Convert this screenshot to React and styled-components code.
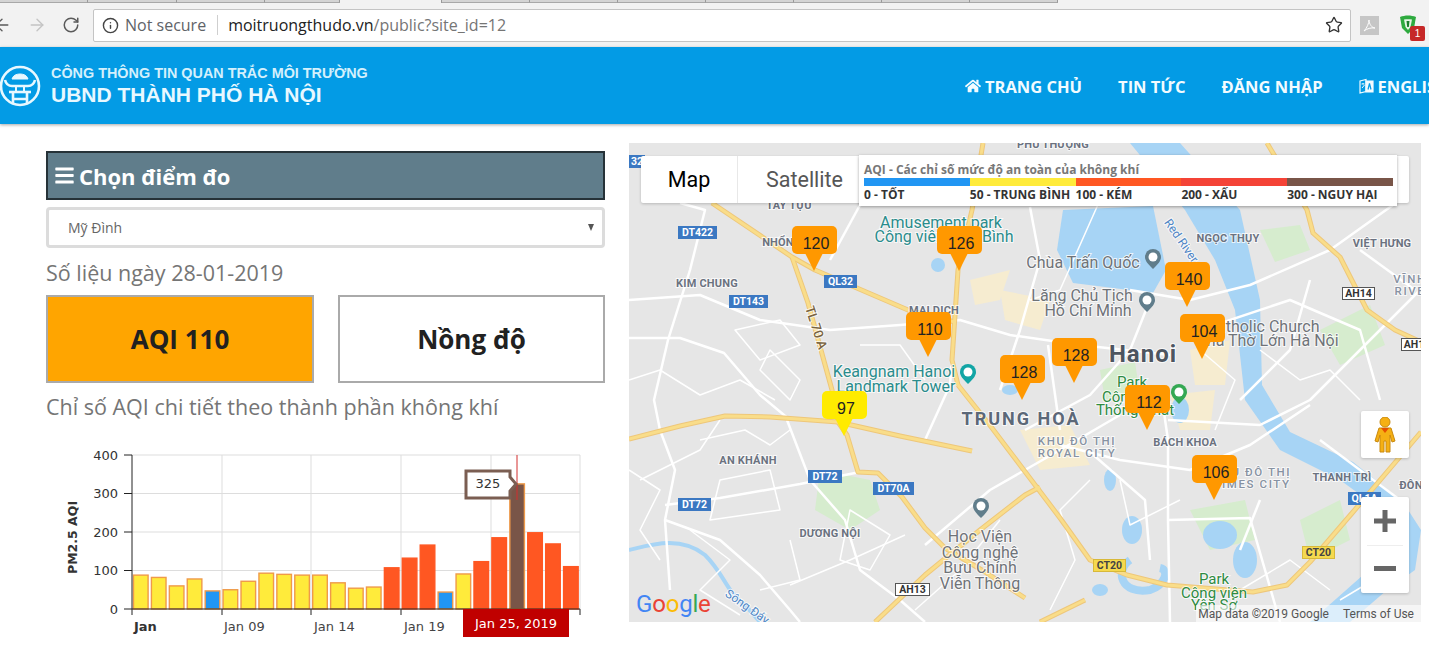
import React from "react";
import styled, { createGlobalStyle } from "styled-components";
import { ArrowLeft, ArrowRight, RotateCw, Info, Star } from "lucide-react";
import { FaHome, FaBars } from "react-icons/fa";

const GlobalStyle = createGlobalStyle`
  html, body {
    margin: 0;
    padding: 0;
    background: #fff;
    overflow: hidden;
  }
  * { box-sizing: border-box; }
`;

const Page = styled.div`
  width: 1429px;
  height: 645px;
  overflow: hidden;
  font-family: "Open Sans", "Liberation Sans", sans-serif;
`;

/* browser chrome */
const TabStrip = styled.div`
  display: flex;
  height: 3px;
  background: #f2f2f2;
`;

const Tab = styled.div`
  width: ${(p) => p.$w}px;
  background: ${(p) => (p.$active ? "#f2f2f2" : "#d4d4d4")};
  border-right: 1px solid #9a9a9a;
  border-bottom: ${(p) => (p.$active ? "none" : "1px solid #a8a8a8")};
`;

const Toolbar = styled.div`
  display: flex;
  align-items: center;
  height: 44px;
  background: #f2f2f2;
  color: #5a5a5a;
`;

const NavButtons = styled.div`
  display: flex;
  align-items: center;
  width: 93px;
  gap: 15px;
  margin-left: -8px;
  flex: none;
`;

const Omnibox = styled.div`
  display: flex;
  align-items: center;
  width: 1258px;
  height: 33px;
  margin-left: 8px;
  padding: 0 7px 0 8px;
  background: #fff;
  border: 1px solid #c4c4c4;
  border-radius: 2px;
  font-size: 16px;
  flex: none;
`;

const Secure = styled.span`
  margin-left: 6px;
  color: #5f6368;
`;

const UrlDivider = styled.span`
  width: 1px;
  height: 20px;
  background: #cfcfcf;
  margin: 0 10px 0 11px;
`;

const Url = styled.span`
  flex: 1;
  color: #222;
  b { font-weight: 400; color: #757575; }
`;

const Extensions = styled.div`
  display: flex;
  align-items: center;
  gap: 20px;
  margin-left: 9px;
  flex: none;
`;

const PdfIcon = styled.div`
  display: flex;
  align-items: center;
  justify-content: center;
  width: 19px;
  height: 19px;
  background: #c6c6c6;
`;

const ShieldWrap = styled.div`
  position: relative;
  width: 18px;
  height: 20px;
`;

const Badge = styled.span`
  position: absolute;
  left: 11px;
  top: 11px;
  width: 15px;
  height: 15px;
  border-radius: 2px;
  background: #c62828;
  color: #fff;
  font: 10px/15px "Liberation Sans", sans-serif;
  text-align: center;
`;

/* site header */
const Header = styled.header`
  display: flex;
  align-items: center;
  height: 77px;
  background: #039be5;
  box-shadow: 0 1px 3px rgba(0, 0, 0, 0.35);
  color: #fff;
  position: relative;
`;

const Brand = styled.div`
  display: flex;
  align-items: center;
  gap: 9px;
  width: 965px;
  flex: none;
`;

const BrandText = styled.div`
  font-family: "Liberation Sans", Arial, sans-serif;
  font-weight: 700;
`;

const BrandTop = styled.div`
  font-size: 14.4px;
  line-height: 17px;
  color: #d4f0fc;
`;

const BrandBottom = styled.div`
  font-size: 21px;
  line-height: 25px;
  color: #e8f8ff;
`;

const Nav = styled.nav`
  display: flex;
  align-items: center;
  gap: 36px;
  padding-top: 1px;
  white-space: nowrap;
`;

const NavItem = styled.a`
  display: flex;
  align-items: center;
  gap: 4px;
  font-size: 16.5px;
  font-weight: 700;
  color: #f2fbff;
`;

/* content */
const Content = styled.main`
  display: flex;
  gap: 24px;
  padding: 19px 0 0 46px;
`;

const Left = styled.section`
  width: 559px;
  padding-top: 8px;
  flex: none;
`;

const PanelTitle = styled.h2`
  display: flex;
  align-items: center;
  gap: 4px;
  height: 49px;
  margin: 0;
  padding: 0 0 0 6px;
  background: #607d8b;
  border: 2px solid #263238;
  color: #fff;
  font-size: 22px;
  font-weight: 700;
`;

const SiteSelect = styled.div`
  display: flex;
  align-items: center;
  justify-content: space-between;
  height: 41px;
  margin-top: 7px;
  padding: 0 8px 0 19px;
  border: 3px solid #dcdcdc;
  border-radius: 4px;
  font-size: 14px;
  color: #666;
`;

const Caret = styled.span`
  width: 0;
  height: 0;
  border-left: 3.5px solid transparent;
  border-right: 3.5px solid transparent;
  border-top: 7px solid #555;
`;

const Caption = styled.p`
  margin: ${(p) => p.$m};
  font-size: 21.5px;
  line-height: 26px;
  color: #757575;
  white-space: nowrap;
`;

const Tiles = styled.div`
  display: grid;
  grid-template-columns: 268px 267px;
  gap: 24px;
`;

const Tile = styled.div`
  display: flex;
  align-items: center;
  justify-content: center;
  height: 88px;
  background: ${(p) => (p.$active ? "#ffa500" : "#fff")};
  border: 2px solid #aaa;
  color: #212121;
  font-size: 26px;
  font-weight: 700;
`;

const ChartWrap = styled.div`
  margin-top: 25px;
`;

const ChartSvg = styled.svg`
  display: block;
`;

const AxisText = styled.text`
  font-family: "DejaVu Sans", Verdana, sans-serif;
  font-size: ${(p) => p.$size || 13}px;
  font-weight: ${(p) => (p.$bold ? 700 : 400)};
  fill: ${(p) => p.$fill || "#333"};
`;

/* map */
const MapBox = styled.section`
  position: relative;
  width: 792px;
  height: 479px;
  overflow: hidden;
  background: #e6e6e6;
  flex: none;
`;

const MapSvg = styled.svg`
  display: block;
`;

const labelKinds = {
  place: "font: 700 11px Roboto, sans-serif; fill: #6b7280; letter-spacing: .2px;",
  district: "font: 700 18px Roboto, sans-serif; fill: #5c6878; letter-spacing: 2px;",
  area: "font: 500 11.5px Roboto, sans-serif; fill: #8792a2; letter-spacing: 1.6px;",
  poi: "font: 400 16px Roboto, sans-serif; fill: #6f7378;",
  teal: "font: 400 16px Roboto, sans-serif; fill: #2a8c8c;",
  park: "font: 400 15px Roboto, sans-serif; fill: #2e8b42;",
  city: "font: 700 24px Roboto, sans-serif; fill: #4d5560; letter-spacing: 1px;",
  water: "font: 400 12px Roboto, sans-serif; fill: #4f86c6;",
  road: "font: 500 13px Roboto, sans-serif; fill: #7a6440;",
};

const MapLabel = styled.text`
  ${(p) => labelKinds[p.$kind]}
  text-anchor: middle;
  paint-order: stroke;
  stroke: rgba(255, 255, 255, 0.75);
  stroke-width: 2px;
`;

const shieldKinds = {
  blue: "background: #3b78c2; color: #fff; border: 1px solid #3b78c2;",
  yellow: "background: #f5d94e; color: #444; border: 1px solid #d8b93a;",
  white: "background: #fff; color: #333; border: 1px solid #555;",
};

const Shield = styled.div`
  position: absolute;
  left: ${(p) => p.$x - 629}px;
  top: ${(p) => p.$y - 143}px;
  width: ${(p) => p.$w}px;
  height: 13px;
  ${(p) => shieldKinds[p.$kind]}
  font: 700 10.5px/11px Roboto, sans-serif;
  text-align: center;
`;

const Marker = styled.div`
  position: absolute;
  left: ${(p) => p.$x - 629}px;
  top: ${(p) => p.$y - 143}px;
  width: 45px;
  height: 28px;
  padding-left: 3px;
  border-radius: 5px;
  background: ${(p) => (p.$good ? "#ffeb00" : "#ff9800")};
  color: #222;
  font: 16px/35px "Liberation Sans", Arial, sans-serif;
  text-align: center;
  &::after {
    content: "";
    position: absolute;
    left: 13px;
    top: 27px;
    border-left: 9px solid transparent;
    border-right: 9px solid transparent;
    border-top: 18px solid ${(p) => (p.$good ? "#ffeb00" : "#ff9800")};
  }
`;

const MapTypes = styled.div`
  position: absolute;
  left: 12px;
  top: 13px;
  display: flex;
  width: 768px;
  height: 47px;
  background: #fff;
  border-radius: 2px;
  box-shadow: 0 1px 3px rgba(0, 0, 0, 0.2);
  font-family: Roboto, sans-serif;
  font-size: 21.5px;
`;

const MapType = styled.div`
  display: flex;
  align-items: center;
  justify-content: center;
  width: ${(p) => p.$w}px;
  color: ${(p) => (p.$active ? "#000" : "#565656")};
  font-weight: 400;
  border-right: ${(p) => (p.$active ? "1px solid #e8e8e8" : "none")};
`;

const Legend = styled.div`
  position: absolute;
  left: 230px;
  top: 12px;
  width: 538px;
  height: 51px;
  padding: 6px 4px 0 5px;
  background: #fff;
  box-shadow: 0 1px 3px rgba(0, 0, 0, 0.35);
  font-size: 12px;
  font-weight: 700;
`;

const LegendTitle = styled.div`
  height: 17px;
  line-height: 18px;
  color: #777;
  white-space: nowrap;
`;

const LegendGrid = styled.div`
  display: grid;
  grid-template-columns: repeat(5, 1fr);
`;

const LegendCell = styled.div`
  color: #333;
  line-height: 16px;
  white-space: nowrap;
  &::before {
    content: "";
    display: block;
    height: 8px;
    margin-bottom: 1px;
    background: ${(p) => p.$color};
  }
`;

const ControlBox = styled.div`
  position: absolute;
  left: 732px;
  top: ${(p) => p.$top}px;
  display: flex;
  flex-direction: column;
  align-items: center;
  justify-content: center;
  width: 48px;
  height: ${(p) => p.$h}px;
  background: #fff;
  border-radius: 2px;
  box-shadow: 0 1px 3px rgba(0, 0, 0, 0.2);
`;

const ZoomButton = styled.div`
  display: flex;
  align-items: center;
  justify-content: center;
  width: 100%;
  height: 48px;
  & + & {
    position: relative;
  }
  & + &::before {
    content: "";
    position: absolute;
    left: 6px;
    right: 6px;
    top: 0;
    height: 1px;
    background: #eee;
  }
`;

const GoogleLogo = styled.div`
  position: absolute;
  left: 7px;
  top: 447px;
  font: 400 24px/28px Roboto, sans-serif;
  letter-spacing: -0.2px;
`;

const GoogleLetter = styled.span`
  color: ${(p) => p.$color};
`;

const Attribution = styled.div`
  position: absolute;
  right: 0;
  bottom: 0;
  display: flex;
  gap: 14px;
  height: 17px;
  padding: 1px 7px 0 2px;
  background: rgba(255, 255, 255, 0.6);
  font: 12px/17px Roboto, sans-serif;
  color: #555;
`;

const bars = [88, 82, 60, 78, 47, 50, 72, 93, 90, 88, 88, 68, 54, 57, 107, 132, 166, 44, 91, 123, 185, 325, 198, 169, 110];

const barColor = (v) => {
  if (v < 50) return "#2196f3";
  if (v < 100) return "#ffeb3b";
  if (v < 200) return "#ff5722";
  if (v < 300) return "#f44336";
  return "#795548";
};

const AqiChart = () => {
  const y0 = 609;
  const scale = 154 / 400;
  return (
    <ChartSvg width="559" height="200" viewBox="46 445 559 200">
      {[455, 493.5, 532, 570.5].map((y) => (
        <line key={y} x1="132" x2="580" y1={y} y2={y} stroke="#ddd" />
      ))}
      {[222, 311, 401, 491, 580].map((x) => (
        <line key={x} x1={x} x2={x} y1="455" y2={y0} stroke="#ddd" />
      ))}
      {bars.map((v, i) => {
        const h = v * scale;
        const x = 133.5 + i * 17.92;
        const fill = barColor(v);
        return (
          <rect
            key={i}
            x={x}
            y={y0 - h}
            width="14.6"
            height={h}
            fill={fill}
            stroke={v >= 100 && v < 300 ? fill : "#ef9a4a"}
            strokeWidth="1.4"
          />
        );
      })}
      <line x1="132" x2="132" y1="455" y2={y0} stroke="#222" />
      <line x1="124" x2="580" y1={y0} y2={y0} stroke="#222" />
      {[455, 493.5, 532, 570.5].map((y) => (
        <line key={y} x1="124" x2="132" y1={y} y2={y} stroke="#222" />
      ))}
      {[132, 222, 311, 401, 491, 580].map((x) => (
        <line key={x} x1={x} x2={x} y1={y0} y2={y0 + 6} stroke="#222" />
      ))}
      {[
        ["400", 460],
        ["300", 498],
        ["200", 537],
        ["100", 575],
        ["0", 614],
      ].map(([t, y]) => (
        <AxisText key={t} x="118" y={y} textAnchor="end">
          {t}
        </AxisText>
      ))}
      <AxisText x="0" y="0" $bold $size={12.5} transform="translate(77 574) rotate(-90)">
        PM2.5 AQI
      </AxisText>
      <AxisText x="134" y="631" $bold>Jan</AxisText>
      <AxisText x="224" y="631" $fill="#444">Jan 09</AxisText>
      <AxisText x="314" y="631" $fill="#444">Jan 14</AxisText>
      <AxisText x="404" y="631" $fill="#444">Jan 19</AxisText>
      <rect x="463" y="609" width="106" height="28" fill="#c00000" />
      <AxisText x="516" y="628" textAnchor="middle" $fill="#fff">Jan 25, 2019</AxisText>
      <line x1="517" x2="517" y1="455" y2="500" stroke="#d32f2f" />
      <path
        d="M466 471h44v6l6 7-6 7v7h-44z"
        fill="#fff"
        stroke="#7b5e52"
        strokeWidth="3"
      />
      <AxisText x="488" y="488" textAnchor="middle">325</AxisText>
    </ChartSvg>
  );
};

const whiteRoads = [
  "M629 338 L680 338 L724 353 L760 395 L790 420",
  "M680 203 L705 210 L690 270 L668 340 L654 400 L660 430 L675 470 L665 520 L670 590",
  "M629 300 L700 295 L760 320 L830 330 L900 325 L960 320 L1010 335 L1080 345 L1170 355",
  "M787 420 L810 480 L845 520 L860 570 L900 600 L925 622",
  "M665 505 L720 498 L800 484 L860 472",
  "M665 520 L720 540 L760 575 L790 610 L800 622",
  "M1025 430 L1090 395 L1130 350 L1150 300",
  "M925 545 L990 490 L1060 450 L1120 415",
  "M1160 385 L1168 440 L1168 520 L1170 622",
  "M1060 445 L1120 460 L1190 470 L1250 445 L1310 405",
  "M1168 520 L1250 518 L1280 622",
  "M1090 452 L1145 500 L1150 560",
  "M1168 420 L1260 425 L1310 400 L1360 350 L1420 290",
  "M1130 290 L1190 300 L1250 285 L1330 250 L1400 200",
  "M1030 207 L1040 260 L1020 330 L1000 390",
  "M1200 330 L1290 300 L1360 330 L1380 400",
  "M860 205 L830 260",
  "M1310 280 L1290 350 L1240 400",
  "M1320 440 L1400 500",
  "M1260 500 L1240 550",
  "M1360 250 L1415 290",
  "M955 320 L950 385 L925 440",
  "M1048 345 L1060 430",
];

const thinRoads = [
  "M760 370 L790 400 L800 380 L770 350 Z",
  "M735 330 L780 320 L800 345 L760 360 Z",
  "M710 520 L780 510 L770 470 L720 480 Z",
  "M640 480 L700 450 L720 420",
  "M850 510 L890 535 L870 570 L840 560 Z",
  "M1000 520 L960 570 L915 610",
  "M1180 500 L1130 525 L1120 480",
  "M790 585 L850 560 L905 535",
  "M1340 600 L1390 570 L1400 540",
  "M629 380 L660 370 L700 395 L740 380 L775 400",
  "M700 440 L745 430 L770 445 L790 430",
  "M629 470 L660 490 L640 530 L660 560",
  "M690 530 L730 560 L700 590 L740 615",
  "M790 540 L800 580 L760 590",
  "M860 345 L900 345 L925 380",
  "M1100 200 L1060 290 L1030 300",
  "M1260 350 L1300 380 L1330 370 L1360 400",
  "M1240 590 L1290 560 L1330 590",
  "M1090 480 L1060 510 L1075 560 L1050 610",
  "M1200 350 L1235 380 L1215 430",
];

const yellowRoads = [
  "M629 439 L680 426 L725 416 L770 417 L838 422 L900 436 L972 451",
  "M838 422 L847 435 L858 472 L878 473 L902 497 L925 528 L945 548 L985 572 L1025 598",
  "M875 622 L925 575 L980 530 L1025 495 L1040 487",
  "M958 385 L992 428 L1020 465 L1060 518 L1090 560 L1127 575 L1167 585 L1253 592 L1287 585 L1310 562 L1353 512 L1421 432",
  "M712 203 L792 257 L815 270 L908 310 L955 322",
  "M792 257 L808 303 L832 390 L838 422",
  "M983 143 L972 210 L958 270 L952 360 L958 385",
  "M1267 143 L1307 210 L1313 233 L1340 257 L1367 310 L1395 330 L1421 342",
  "M1085 600 L1040 622",
];

const marks = [
  { v: 120, x: 792, y: 226 },
  { v: 126, x: 937, y: 226 },
  { v: 110, x: 906, y: 312 },
  { v: 128, x: 1000, y: 355 },
  { v: 128, x: 1052, y: 338 },
  { v: 140, x: 1165, y: 262 },
  { v: 104, x: 1180, y: 314 },
  { v: 112, x: 1125, y: 385 },
  { v: 106, x: 1192, y: 455 },
  { v: 97, x: 822, y: 391, good: true },
];

const shields = [
  { t: "32", x: 629, y: 155, w: 16, kind: "blue" },
  { t: "DT422", x: 678, y: 226, w: 39, kind: "blue" },
  { t: "QL32", x: 824, y: 275, w: 33, kind: "blue" },
  { t: "DT143", x: 729, y: 295, w: 39, kind: "blue" },
  { t: "DT72", x: 808, y: 470, w: 34, kind: "blue" },
  { t: "DT70A", x: 873, y: 482, w: 41, kind: "blue" },
  { t: "DT72", x: 678, y: 498, w: 33, kind: "blue" },
  { t: "QL1A", x: 1348, y: 492, w: 33, kind: "blue" },
  { t: "AH14", x: 1342, y: 287, w: 33, kind: "white" },
  { t: "AH1", x: 1401, y: 338, w: 26, kind: "white" },
  { t: "AH13", x: 895, y: 583, w: 35, kind: "white" },
  { t: "CT20", x: 1302, y: 546, w: 33, kind: "yellow" },
  { t: "CT20", x: 1093, y: 559, w: 33, kind: "yellow" },
];

const labels = [
  ["place", "PHÚ THƯỢNG", 1053, 148],
  ["place", "TÂY TỰU", 789, 209],
  ["place", "NHỔN", 778, 246],
  ["place", "KIM CHUNG", 707, 287],
  ["place", "MAI DỊCH", 934, 314],
  ["place", "NGỌC THỤY", 1228, 242],
  ["place", "VIỆT HƯNG", 1382, 247],
  ["area", "VĨNH", 1410, 283],
  ["area", "RIVE", 1410, 295],
  ["place", "AN KHÁNH", 748, 464],
  ["place", "DƯƠNG NỘI", 830, 537],
  ["place", "BÁCH KHOA", 1185, 446],
  ["place", "THANH TRÌ", 1342, 481],
  ["place", "ĐÔN", 1411, 489],
  ["district", "TRUNG HOÀ", 1021, 425],
  ["area", "KHU ĐÔ THỊ", 1077, 445],
  ["area", "ROYAL CITY", 1077, 457],
  ["area", "KHU ĐÔ THỊ", 1252, 476],
  ["area", "TIMES CITY", 1252, 488],
  ["teal", "Amusement park", 941, 228],
  ["teal", "Công viên Hòa Bình", 944, 242],
  ["teal", "Keangnam Hanoi", 894, 377],
  ["teal", "Landmark Tower", 896, 392],
  ["poi", "Chùa Trấn Quốc", 1083, 268],
  ["poi", "Lăng Chủ Tịch", 1082, 301],
  ["poi", "Hồ Chí Minh", 1088, 316],
  ["poi", "Catholic Church", 1263, 332],
  ["poi", "Nhà Thờ Lớn Hà Nội", 1267, 346],
  ["poi", "Học Viện", 980, 542],
  ["poi", "Công nghệ", 980, 558],
  ["poi", "Bưu Chính", 980, 573],
  ["poi", "Viễn Thông", 980, 589],
  ["city", "Hanoi", 1143, 362],
  ["park", "Park", 1132, 387],
  ["park", "Công viên", 1135, 402],
  ["park", "Thống Nhất", 1135, 415],
  ["park", "Park", 1214, 584],
  ["park", "Công viên", 1214, 598],
  ["park", "Yên Sở", 1214, 610],
];

const MapPin = ({ x, y, color }) => (
  <g transform={`translate(${x} ${y})`}>
    <path d="M0 10 C-5 5 -8 2 -8 -2 A8 8 0 1 1 8 -2 C8 2 5 5 0 10Z" fill={color} />
    <circle cx="0" cy="-2" r="4.5" fill="#fff" />
  </g>
);

const MapDrawing = () => (
  <MapSvg width="792" height="479" viewBox="629 143 792 479">
    <rect x="629" y="143" width="792" height="479" fill="#e6e6e6" />
    {/* parks and built up patches */}
    <g fill="#d6ecce">
      <path d="M820 470 L870 480 L880 510 L850 530 L815 510Z" />
      <path d="M1320 330 L1370 305 L1385 345 L1340 365Z" />
      <path d="M1100 370 L1135 362 L1140 395 L1105 400Z" />
      <path d="M1190 510 L1245 500 L1255 540 L1210 550Z" />
      <path d="M1260 230 L1300 225 L1310 250 L1275 262Z" />
      <path d="M1300 520 L1340 500 L1350 540 L1310 560Z" />
    </g>
    <g fill="#f6ecd0">
      <path d="M1000 290 L1050 300 L1040 330 L1005 320Z" />
      <path d="M1020 430 L1070 425 L1090 465 L1040 470Z" />
      <path d="M1170 395 L1215 390 L1210 430 L1180 430Z" />
      <path d="M1190 350 L1230 340 L1225 385 L1195 385Z" />
      <path d="M970 280 L1010 270 L1000 300 L975 305Z" />
    </g>
    {/* water */}
    <g fill="#a7d4f5">
      <path d="M1063 210 L1153 206 L1166 270 L1153 293 L1073 283 L1057 250Z" />
      <path d="M1130 143 L1180 143 L1240 210 L1260 300 L1262 385 L1290 432 L1353 462 L1403 502 L1421 530 L1415 570 L1387 590 L1350 622 L1310 622 L1380 560 L1395 520 L1340 480 L1280 450 L1245 400 L1235 310 L1215 260 L1185 210Z" />
      <ellipse cx="1220" cy="535" rx="17" ry="14" />
      <ellipse cx="1245" cy="560" rx="12" ry="18" />
      <ellipse cx="1132" cy="530" rx="10" ry="14" />
      <ellipse cx="1110" cy="480" rx="6" ry="11" />
      <ellipse cx="1180" cy="410" rx="9" ry="13" />
      <ellipse cx="1100" cy="590" rx="8" ry="6" />
      <ellipse cx="938" cy="265" rx="7" ry="7" />
      <ellipse cx="1010" cy="390" rx="8" ry="5" />
    </g>
    <path
      d="M629 550 C650 545 680 535 705 555 C725 575 725 590 745 605 L760 622"
      fill="none"
      stroke="#a7d4f5"
      strokeWidth="4"
    />
    <path d="M1130 560 C1115 570 1120 595 1150 590 C1165 585 1170 570 1160 568" fill="none" stroke="#a7d4f5" strokeWidth="8" />
    <g fill="none" stroke="#fff" strokeLinejoin="round">
      {thinRoads.map((d) => (
        <path key={d} d={d} strokeWidth="1.5" />
      ))}
      {whiteRoads.map((d) => (
        <path key={d} d={d} strokeWidth="2.5" />
      ))}
    </g>
    <g fill="none" strokeLinejoin="round">
      {yellowRoads.map((d) => (
        <path key={d} d={d} stroke="#eec77a" strokeWidth="5" />
      ))}
      {yellowRoads.map((d) => (
        <path key={d} d={d} stroke="#f9dd8a" strokeWidth="3" />
      ))}
    </g>
    {labels.map(([kind, text, x, y]) => (
      <MapLabel key={text + x} $kind={kind} x={x} y={y}>
        {text}
      </MapLabel>
    ))}
    <MapLabel $kind="road" transform="translate(812 329) rotate(72)">TL 70 A</MapLabel>
    <MapLabel $kind="water" transform="translate(1178 243) rotate(55)">Red River</MapLabel>
    <MapLabel $kind="water" transform="translate(745 610) rotate(35)">Sông Đáy</MapLabel>
    <MapPin x={1153} y={259} color="#607d8b" />
    <MapPin x={1147} y={302} color="#607d8b" />
    <MapPin x={981} y={508} color="#607d8b" />
    <MapPin x={968} y={374} color="#12a5a5" />
    <MapPin x={1179} y={394} color="#34a853" />
  </MapSvg>
);

const Pegman = () => (
  <svg width="22" height="36" viewBox="0 0 22 36">
    <circle cx="11" cy="5" r="5" fill="#f5b014" stroke="#c98a10" />
    <path
      d="M5 11 H17 L21 24 L18 25 L16 18 V35 H12 V24 H10 V35 H6 V18 L4 25 L1 24Z"
      fill="#f5b014"
      stroke="#c98a10"
    />
    <path d="M7 11 L11 16 L15 11Z" fill="#e65100" />
  </svg>
);

const Logo = () => (
  <svg width="42" height="42" viewBox="0 0 42 42" fill="none" stroke="#e8f8ff">
    <circle cx="20" cy="21" r="19" strokeWidth="2.6" />
    <path d="M13 12 C15 8 25 8 27 12 L28 14 H12Z" fill="#e8f8ff" strokeWidth="1" />
    <path d="M5 15 C6 19 8 21 12 21 H28 C32 21 34 19 35 15" strokeWidth="2.6" />
    <path d="M9 27 H31" strokeWidth="2.6" />
    <path d="M16 21 V27 M24 21 V27" strokeWidth="2" />
    <path d="M13 27 V38 M27 27 V38 M13 34 H27" strokeWidth="2.6" />
  </svg>
);

const LanguageIcon = () => (
  <svg width="15" height="16" viewBox="0 0 15 16" fill="none" stroke="#f2fbff" strokeWidth="1.2">
    <path d="M1 3 L7 1.5 V13.5 L1 15Z" />
    <path d="M7 3 H14 V14 H7Z" fill="#f2fbff" />
    <path d="M9 11.5 L10.5 5.5 L12 11.5" stroke="#039be5" />
    <path d="M2.5 6 H5.5 M4 5 V6 M3 10 L5.5 7" strokeWidth="1" />
  </svg>
);

const PdfGlyph = () => (
  <svg width="15" height="15" viewBox="0 0 15 15" fill="none" stroke="#fff" strokeWidth="1">
    <path d="M2 13 C5 10 7 5 7 2 C7 6 10 10 13 10 C9 9.5 5 10.5 2 13Z" />
  </svg>
);

const ShieldIcon = () => (
  <svg width="18" height="20" viewBox="0 0 18 20">
    <path d="M1 2 C6 0 12 0 17 2 L15 13 L9 19 L3 13Z" fill="#2eaa3f" />
    <path d="M5 4.5 C7.5 4 10.5 4 13 4.5 L11.5 12 L9 15 L6.5 12Z" fill="#e6f5e6" />
    <path d="M7.5 6 H10.5 L9.8 12 H8.2Z" fill="#1b7e2c" />
  </svg>
);

const tabWidths = [88, 89, 88, 75, 102, 88, 88, 88, 88, 88, 88, 88];

export default function App() {
  return (
    <Page>
      <GlobalStyle />
      <TabStrip>
        {tabWidths.map((w, i) => (
          <Tab key={i} $w={w} $active={i === 4} />
        ))}
      </TabStrip>
      <Toolbar>
        <NavButtons>
          <ArrowLeft size={20} strokeWidth={1.6} color="#5a5a5a" />
          <ArrowRight size={20} strokeWidth={1.6} color="#c4c4c4" />
          <RotateCw size={18} strokeWidth={2} color="#5a5a5a" />
        </NavButtons>
        <Omnibox>
          <Info size={17} strokeWidth={2} color="#444" />
          <Secure>Not secure</Secure>
          <UrlDivider />
          <Url>
            moitruongthudo.vn<b>/public?site_id=12</b>
          </Url>
          <Star size={18} strokeWidth={1.8} color="#333" />
        </Omnibox>
        <Extensions>
          <PdfIcon>
            <PdfGlyph />
          </PdfIcon>
          <ShieldWrap>
            <ShieldIcon />
            <Badge>1</Badge>
          </ShieldWrap>
        </Extensions>
      </Toolbar>
      <Header>
        <Brand>
          <Logo />
          <BrandText>
            <BrandTop>CÔNG THÔNG TIN QUAN TRẮC MÔI TRƯỜNG</BrandTop>
            <BrandBottom>UBND THÀNH PHỐ HÀ NỘI</BrandBottom>
          </BrandText>
        </Brand>
        <Nav>
          <NavItem>
            <FaHome size={16} />
            TRANG CHỦ
          </NavItem>
          <NavItem>TIN TỨC</NavItem>
          <NavItem>ĐĂNG NHẬP</NavItem>
          <NavItem>
            <LanguageIcon />
            ENGLISH
          </NavItem>
        </Nav>
      </Header>
      <Content>
        <Left>
          <PanelTitle>
            <FaBars size={21} />
            Chọn điểm đo
          </PanelTitle>
          <SiteSelect>
            Mỹ Đình
            <Caret />
          </SiteSelect>
          <Caption $m="12px 0 9px">Số liệu ngày 28-01-2019</Caption>
          <Tiles>
            <Tile $active>AQI 110</Tile>
            <Tile>Nồng độ</Tile>
          </Tiles>
          <Caption $m="11px 0 0">Chỉ số AQI chi tiết theo thành phần không khí</Caption>
          <ChartWrap>
            <AqiChart />
          </ChartWrap>
        </Left>
        <MapBox>
          <MapDrawing />
          {shields.map((s) => (
            <Shield key={s.t + s.x} $kind={s.kind} $x={s.x} $y={s.y} $w={s.w}>
              {s.t}
            </Shield>
          ))}
          {marks.map((m) => (
            <Marker key={m.x} $x={m.x} $y={m.y} $good={m.good}>
              {m.v}
            </Marker>
          ))}
          <MapTypes>
            <MapType $active $w={97}>Map</MapType>
            <MapType $w={133}>Satellite</MapType>
          </MapTypes>
          <Legend>
            <LegendTitle>AQI - Các chỉ số mức độ an toàn của không khí</LegendTitle>
            <LegendGrid>
              <LegendCell $color="#2196f3">0 - TỐT</LegendCell>
              <LegendCell $color="#ffeb3b">50 - TRUNG BÌNH</LegendCell>
              <LegendCell $color="#ff5722">100 - KÉM</LegendCell>
              <LegendCell $color="#f44336">200 - XẤU</LegendCell>
              <LegendCell $color="#795548">300 - NGUY HẠI</LegendCell>
            </LegendGrid>
          </Legend>
          <ControlBox $top={268} $h={47}>
            <Pegman />
          </ControlBox>
          <ControlBox $top={354} $h={96}>
            <ZoomButton>
              <svg width="22" height="22" viewBox="0 0 22 22">
                <path d="M0 8.5H8.5V0H13.5V8.5H22V13.5H13.5V22H8.5V13.5H0Z" fill="#666" />
              </svg>
            </ZoomButton>
            <ZoomButton>
              <svg width="22" height="6" viewBox="0 0 22 6">
                <rect width="22" height="5" fill="#666" />
              </svg>
            </ZoomButton>
          </ControlBox>
          <GoogleLogo>
            <GoogleLetter $color="#4285f4">G</GoogleLetter>
            <GoogleLetter $color="#ea4335">o</GoogleLetter>
            <GoogleLetter $color="#fbbc05">o</GoogleLetter>
            <GoogleLetter $color="#4285f4">g</GoogleLetter>
            <GoogleLetter $color="#34a853">l</GoogleLetter>
            <GoogleLetter $color="#ea4335">e</GoogleLetter>
          </GoogleLogo>
          <Attribution>
            <span>Map data ©2019 Google</span>
            <span>Terms of Use</span>
          </Attribution>
        </MapBox>
      </Content>
    </Page>
  );
}
